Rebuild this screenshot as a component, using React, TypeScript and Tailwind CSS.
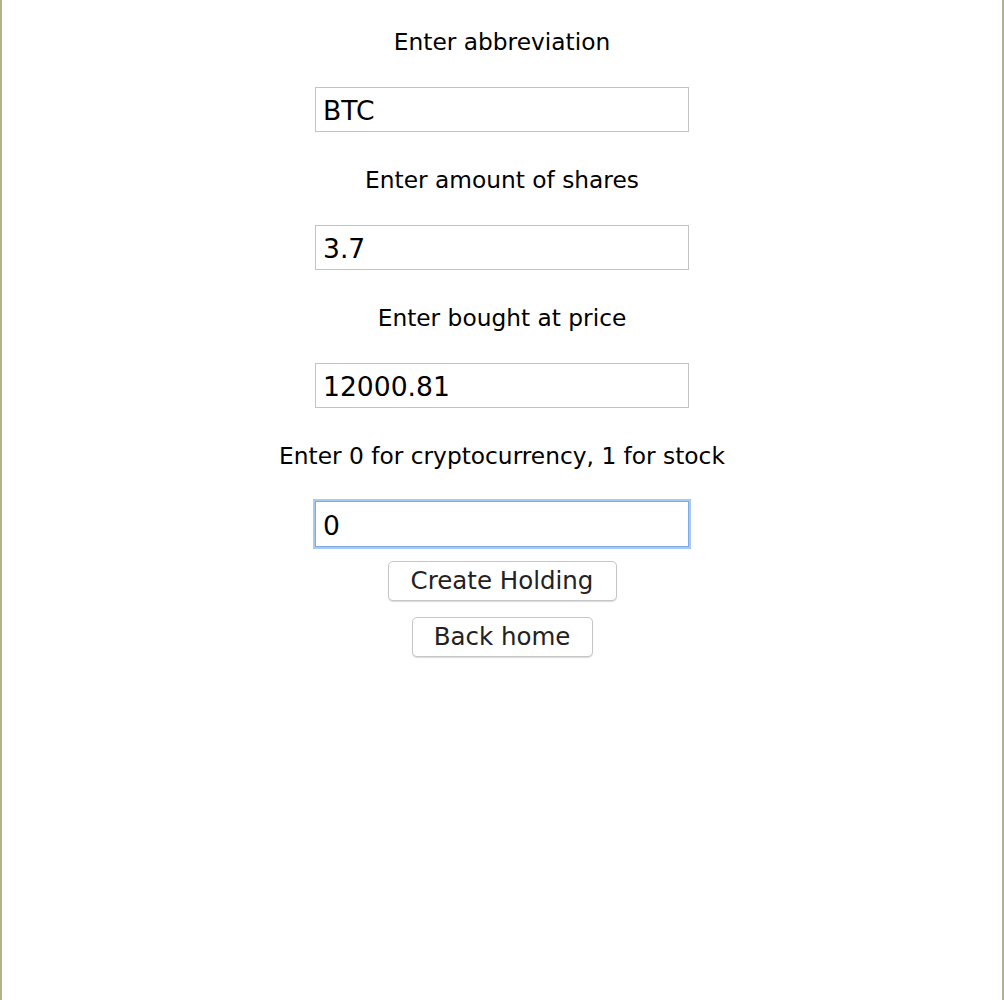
import { useState } from "react";

const fields = [
  { label: "Enter abbreviation", value: "BTC" },
  { label: "Enter amount of shares", value: "3.7" },
  { label: "Enter bought at price", value: "12000.81" },
  { label: "Enter 0 for cryptocurrency, 1 for stock", value: "0", focused: true },
];

export default function App() {
  const [values, setValues] = useState(fields.map((f) => f.value));

  return (
    <div className="flex min-h-screen border-x-2 border-[#b2b28c] bg-white font-['DejaVu_Sans',sans-serif] text-black">
      <div className="flex w-full flex-col items-center pt-[28px]">
        {fields.map((field, i) => (
          <div key={field.label} className="flex flex-col items-center">
            <p className="h-[28px] text-[23.3px] leading-[28px]">{field.label}</p>
            <input
              value={values[i]}
              onChange={(e) => {
                const next = [...values];
                next[i] = e.target.value;
                setValues(next);
              }}
              className={
                field.focused
                  ? "mb-[14px] mt-[31px] h-[46px] w-[374px] border border-[#7ea9e2] bg-white px-[7px] pt-[2px] text-[26.6px] outline-none shadow-[0_0_0_2px_#a8c9f3]"
                  : "mb-[34px] mt-[31px] h-[45px] w-[374px] border border-[#c3c3c3] bg-white px-[7px] pt-[2px] text-[26.6px] outline-none"
              }
            />
          </div>
        ))}
        <button className="h-[40px] w-[229px] rounded-[5px] border border-[#c6c6c6] bg-white text-[24.5px] text-[#222] shadow-[0_1px_1px_rgba(0,0,0,0.15)]">
          Create Holding
        </button>
        <button className="mt-[16px] h-[40px] w-[181px] rounded-[5px] border border-[#c6c6c6] bg-white text-[24.5px] text-[#222] shadow-[0_1px_1px_rgba(0,0,0,0.15)]">
          Back home
        </button>
      </div>
    </div>
  );
}
